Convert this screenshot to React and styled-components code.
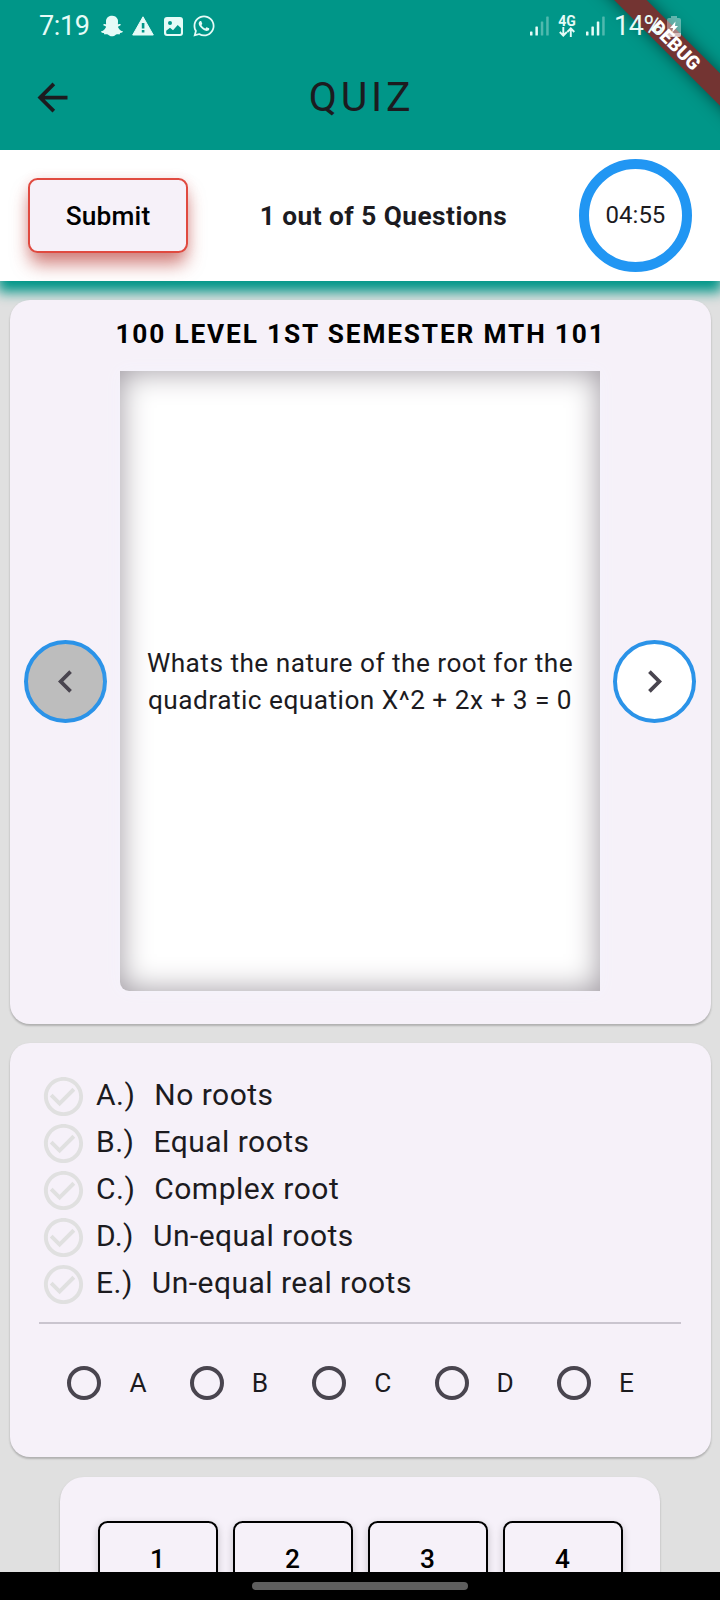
import React from 'react';
import styled, { createGlobalStyle } from 'styled-components';
import { FaSnapchatGhost, FaWhatsapp } from 'react-icons/fa';

const GlobalStyle = createGlobalStyle`
  * { box-sizing: border-box; }
  html, body { margin: 0; background: #e0e0e0; }
  body { font-family: Roboto, "Liberation Sans", sans-serif; color: #1c1b1f; overflow: hidden; }
`;

const Screen = styled.div`
  position: relative;
  width: 720px;
  height: 1600px;
  overflow: hidden;
  display: flex;
  flex-direction: column;
  background: #e0e0e0;
`;

const Header = styled.header`
  position: relative;
  height: 150px;
  flex: none;
  background: #009688;
  overflow: hidden;
`;

const StatusBar = styled.div`
  position: relative;
  z-index: 1;
  height: 52px;
  padding: 0 39px;
  display: flex;
  justify-content: space-between;
  align-items: center;
  color: #e6fbf7;
  font-size: 27px;
  line-height: 32px;
`;

const StatusGroup = styled.div`
  display: flex;
  align-items: center;
  height: 32px;
  gap: ${(p) => p.$gap}px;
`;

const Clock = styled.span`
  width: 52px;
  letter-spacing: -0.4px;
`;

const Network = styled.span`
  display: flex;
  flex-direction: column;
  align-items: center;
  width: 18px;
  font-size: 14px;
  font-weight: 700;
  line-height: 12px;
  padding-bottom: 1px;
`;

const Percent = styled.span`
  width: 52px;
  margin-right: -8.5px;
  white-space: nowrap;
  letter-spacing: -0.4px;
`;

const AppBar = styled.div`
  display: grid;
  grid-template-columns: 105px 1fr 105px;
  align-items: center;
  height: 90px;
`;

const BackButton = styled.button`
  display: flex;
  justify-content: center;
  border: 0;
  padding: 0;
  background: none;
  color: #1c1b1f;
`;

const Title = styled.h1`
  margin: 0;
  text-align: center;
  font-weight: 400;
  font-size: 41px;
  line-height: 50px;
  letter-spacing: 3.75px;
  padding-left: 3px;
`;

const DebugBanner = styled.div`
  position: absolute;
  left: 575.5px;
  top: 34px;
  width: 200px;
  height: 22.5px;
  transform: rotate(45deg);
  background: #733432;
  box-shadow: 0 0 16px rgba(0, 0, 0, 0.5);
  color: #fff;
  text-align: center;
  font-size: 19px;
  font-weight: 900;
  line-height: 23px;
`;

const InfoBar = styled.section`
  height: 131px;
  flex: none;
  display: flex;
  justify-content: space-between;
  align-items: center;
  padding: 0 28px;
  background: #fff;
  box-shadow: 0 9px 12px 2px #009688;
`;

const SubmitButton = styled.button`
  width: 160px;
  height: 75px;
  border: 2px solid #e04a40;
  border-radius: 9.5px;
  background: #f6f1f9;
  box-shadow: 0 13px 18px -2px rgba(180, 45, 38, 0.6), 0 0 12px rgba(190, 45, 38, 0.12);
  font: 500 26.25px/30px Roboto, sans-serif;
  letter-spacing: 0.19px;
  color: #000;
`;

const Progress = styled.div`
  font-size: 26.25px;
  font-weight: 700;
  letter-spacing: 0.47px;
`;

const Timer = styled.div`
  width: 113px;
  height: 113px;
  border: 10px solid #2196f3;
  border-radius: 50%;
  display: flex;
  align-items: center;
  justify-content: center;
  font-size: 24px;
  line-height: 28px;
  padding-bottom: 2px;
`;

const Card = styled.section`
  flex: none;
  align-self: center;
  width: ${(p) => p.$width || 701}px;
  height: ${(p) => p.$height}px;
  margin-top: ${(p) => p.$gap || 19}px;
  border-radius: ${(p) => p.$radius || 20}px;
  background: #f6f1f9;
  box-shadow: 0 2px 2px rgba(0, 0, 0, 0.17), 0 1px 3px rgba(0, 0, 0, 0.08);
`;

const CourseTitle = styled.h2`
  margin: 0;
  padding: 17px 0 20px 1px;
  text-align: center;
  font-size: 26.25px;
  line-height: 34px;
  font-weight: 700;
  letter-spacing: 1.84px;
  color: #000;
`;

const QuestionRow = styled.div`
  display: flex;
  align-items: center;
  justify-content: space-between;
  padding: 0 14.5px;
`;

const NavButton = styled.button`
  width: 83px;
  height: 83px;
  padding: 0;
  display: flex;
  align-items: center;
  justify-content: center;
  border: 4px solid #2b93e8;
  border-radius: 50%;
  background: ${(p) => (p.$muted ? '#bdbdbd' : '#fff')};
  color: #49454f;
`;

const Question = styled.div`
  width: 480px;
  height: 620px;
  padding-top: 2px;
  display: flex;
  align-items: center;
  justify-content: center;
  text-align: center;
  border-radius: 0 0 0 9px;
  background: #fff;
  box-shadow: inset 0 0 31px #9c969e, 0 0 18px #f5f4fc;
  font-size: 26.25px;
  line-height: 37.5px;
  letter-spacing: 0.47px;
  white-space: pre-line;
`;

const Options = styled.div`
  padding: 30px 30px 0 30px;
`;

const Option = styled.div`
  display: flex;
  align-items: center;
  height: 47px;
  font-size: 30px;
  letter-spacing: 0.47px;
  color: #1c1b1f;

  svg { margin: 0 9.5px 0 0; color: #e0e0e0; flex: none; }
`;

const Letter = styled.span`
  margin: -4px 19px 0 0;
`;

const Answer = styled.span`
  margin-top: -4px;
`;

const Divider = styled.hr`
  width: 642px;
  height: 2px;
  margin: 14px auto 0;
  border: 0;
  background: #cac5cf;
`;

const Radios = styled.div`
  display: grid;
  grid-template-columns: repeat(5, 122.4px);
  padding: 42px 0 0 57.9px;
`;

const RadioItem = styled.label`
  display: flex;
  align-items: center;
  gap: 28px;
  font-size: 26.25px;
  line-height: 34px;
`;

const Radio = styled.span`
  width: 34px;
  height: 34px;
  border: 4px solid #49454f;
  border-radius: 50%;
`;

const Numbers = styled.div`
  display: grid;
  grid-template-columns: repeat(4, 120px);
  gap: 15px;
  padding: 44px 37.5px 0;
`;

const NumberButton = styled.button`
  height: 75px;
  border: 2px solid #000;
  border-radius: 9.5px;
  background: #f6f1f9;
  box-shadow: 0 3px 8px rgba(0, 0, 0, 0.2);
  font: 500 26.25px/30px Roboto, sans-serif;
  color: #000;
`;

const SystemNav = styled.nav`
  position: absolute;
  left: 0;
  right: 0;
  bottom: 0;
  height: 28px;
  display: flex;
  justify-content: center;
  padding-top: 10px;
  background: #000;
`;

const HomePill = styled.div`
  width: 216px;
  height: 8px;
  border-radius: 4px;
  background: #5e5e5e;
`;

const Icon = ({ size, d }) => (
  <svg width={size} height={size} viewBox="0 0 24 24" fill="currentColor">
    <path d={d} />
  </svg>
);

const Signal = ({ level }) => (
  <svg width="19" height="20" viewBox="0 0 19 20" fill="currentColor">
    {[4, 9, 14, 19].map((h, i) => (
      <rect key={h} x={i * 5.4} y={19.5 - h} width="2.5" height={h} rx="0.6" opacity={i < level ? 1 : 0.35} />
    ))}
  </svg>
);

const Warning = () => (
  <svg width="22" height="20" viewBox="0 0 22 20">
    <path d="M11 .8 21.3 19H.7z" fill="currentColor" stroke="currentColor" strokeLinejoin="round" />
    <path d="M9.8 7h2.6v5.6H9.8zM9.8 14h2.6v2.6H9.8z" fill="#009688" />
  </svg>
);

const Picture = () => (
  <svg width="19" height="19" viewBox="0 0 19 19">
    <rect width="19" height="19" rx="3" fill="currentColor" />
    <circle cx="6" cy="6" r="2" fill="#009688" />
    <path d="M2.2 13.7 6 10.7l3 2.6 4.7-5.4 3.2 3V16q0 1-1 1H3.2q-1 0-1-1z" fill="#009688" />
  </svg>
);

const DataArrows = () => (
  <svg width="16" height="10" viewBox="0 0 16 10" fill="none" stroke="currentColor" strokeWidth="1.9">
    <path d="M4.3 0v8.3M.8 5l3.5 3.6L7.8 5M11.8 10V1.5M8.3 5l3.5-3.6L15.3 5" />
  </svg>
);

const Battery = () => (
  <svg width="14" height="21" viewBox="0 0 14 21">
    <path d="M4 0h6v2h2q2 0 2 2v15q0 2-2 2H2q-2 0-2-2V4q0-2 2-2h2z" fill="#fff" opacity=".38" />
    <path d="M8.5 5.5 3 12h3l-.8 4.5L11 10H8z" fill="#fff" />
    <path d="M0 17h14v2q0 2-2 2H2q-2 0-2-2z" fill="#fff" opacity=".5" />
  </svg>
);

const ARROW = 'M20 11H7.83l5.59-5.59L12 4l-8 8 8 8 1.41-1.41L7.83 13H20v-2z';
const LEFT = 'M15.41 7.41 14 6l-6 6 6 6 1.41-1.41L10.83 12z';
const RIGHT = 'M10 6 8.59 7.41 13.17 12l-4.58 4.59L10 18l6-6z';
const CHECK =
  'M16.59 7.58 10 14.17l-3.59-3.58L5 12l5 5 8-8zM12 2C6.48 2 2 6.48 2 12s4.48 10 10 10 10-4.48 10-10S17.52 2 12 2zm0 18c-4.42 0-8-3.58-8-8s3.58-8 8-8 8 3.58 8 8-3.58 8-8 8z';

const options = [
  ['A', 'No roots'],
  ['B', 'Equal roots'],
  ['C', 'Complex root'],
  ['D', 'Un-equal roots'],
  ['E', 'Un-equal real roots'],
];

export default function App() {
  return (
    <Screen>
      <GlobalStyle />
      <Header>
        <StatusBar>
          <StatusGroup $gap={9.6}>
            <Clock>7:19</Clock>
            <FaSnapchatGhost size={22} />
            <Warning />
            <Picture />
            <FaWhatsapp size={24} />
          </StatusGroup>
          <StatusGroup $gap={9.5}>
            <Signal level={2} />
            <Network>
              4G
              <DataArrows />
            </Network>
            <Signal level={3} />
            <Percent>14%</Percent>
            <Battery />
          </StatusGroup>
        </StatusBar>
        <AppBar>
          <BackButton aria-label="Back"><Icon size={45} d={ARROW} /></BackButton>
          <Title>QUIZ</Title>
        </AppBar>
        <DebugBanner>DEBUG</DebugBanner>
      </Header>

      <InfoBar>
        <SubmitButton>Submit</SubmitButton>
        <Progress>1 out of 5 Questions</Progress>
        <Timer>04:55</Timer>
      </InfoBar>

      <Card $height={724}>
        <CourseTitle>100 LEVEL 1ST SEMESTER MTH 101</CourseTitle>
        <QuestionRow>
          <NavButton $muted aria-label="Previous"><Icon size={45} d={LEFT} /></NavButton>
          <Question>{'Whats the nature of the root for the\nquadratic equation X^2 + 2x + 3 = 0'}</Question>
          <NavButton aria-label="Next"><Icon size={45} d={RIGHT} /></NavButton>
        </QuestionRow>
      </Card>

      <Card $height={414}>
        <Options>
          {options.map(([letter, text]) => (
            <Option key={letter}>
              <Icon size={47} d={CHECK} />
              <Letter>{letter}.)</Letter>
              <Answer>{text}</Answer>
            </Option>
          ))}
        </Options>
        <Divider />
        <Radios>
          {options.map(([letter]) => (
            <RadioItem key={letter}>
              <Radio />
              {letter}
            </RadioItem>
          ))}
        </Radios>
      </Card>

      <Card $height={200} $width={600} $radius={24} $gap={20}>
        <Numbers>
          {[1, 2, 3, 4].map((n) => (
            <NumberButton key={n}>{n}</NumberButton>
          ))}
        </Numbers>
      </Card>

      <SystemNav><HomePill /></SystemNav>
    </Screen>
  );
}
